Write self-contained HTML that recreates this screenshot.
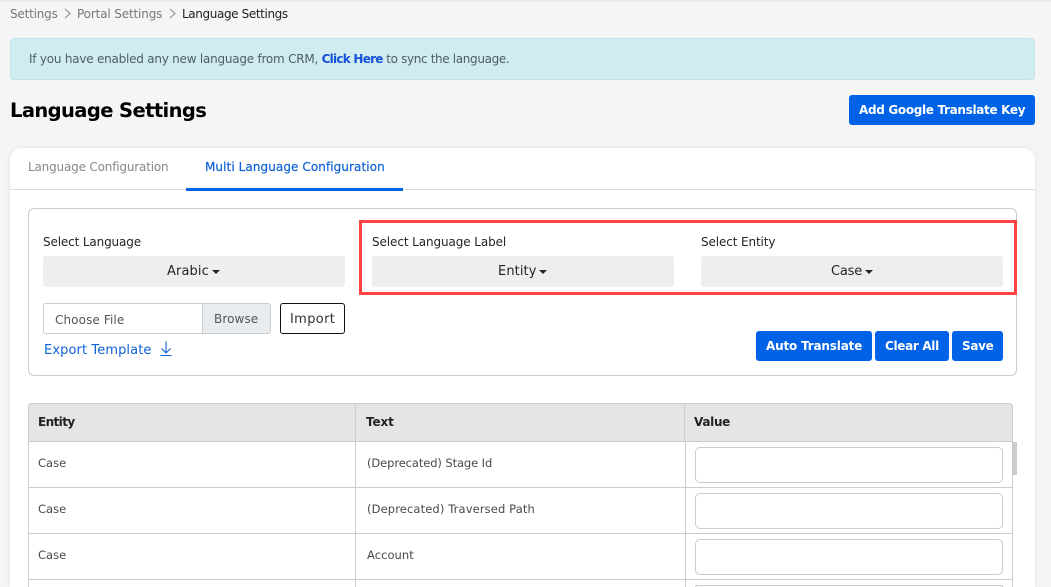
<!DOCTYPE html>
<html><head><meta charset="utf-8"><style>
html,body{margin:0;padding:0;width:1051px;height:587px;overflow:hidden;background:#f5f5f5}
body{position:relative;font-family:"DejaVu Sans","Liberation Sans",sans-serif;font-size:12px;color:#212529}
.a{position:absolute;box-sizing:border-box}
.t{position:absolute;white-space:nowrap;line-height:20px;height:20px}
.btn{position:absolute;box-sizing:border-box;background:#0062e6;border-radius:3px;color:#fff;font-weight:bold}
.dd{position:absolute;box-sizing:border-box;background:#eee;border-radius:3px;height:31px;width:302px;top:256px}
.car{position:absolute;width:0;height:0;border-left:4px solid transparent;border-right:4px solid transparent;border-top:4px solid #212529;top:270px}
.inp{position:absolute;box-sizing:border-box;left:695px;width:308px;height:36px;background:#fff;border:1px solid #ccc;border-radius:5px}
.hl{position:absolute;left:28px;width:985px;height:1px;background:#ccc}
.cell{color:#4a4a4a;font-size:11.5px}
</style></head><body>
<div class="a" style="left:0;top:0;width:1051px;height:3px;background:linear-gradient(#e8e8e8,#f5f5f5)"></div>

<div class="t" style="left:10px;top:4px;color:#777;font-size:12px;letter-spacing:-.2px">Settings</div>
<svg class="a" style="left:63px;top:8px" width="9" height="11" viewBox="0 0 9 11"><path d="M2 1l5 4.5L2 10" fill="none" stroke="#888" stroke-width="1"/></svg>
<div class="t" style="left:77px;top:4px;color:#777;font-size:12px;letter-spacing:-.15px">Portal Settings</div>
<svg class="a" style="left:168px;top:8px" width="9" height="11" viewBox="0 0 9 11"><path d="M2 1l5 4.5L2 10" fill="none" stroke="#888" stroke-width="1"/></svg>
<div class="t" style="left:182px;top:4px;color:#222;font-size:12px;letter-spacing:-.38px">Language Settings</div>

<div class="a" style="left:10px;top:38px;width:1025px;height:42px;background:#d1ecf1;border:1px solid #bee5eb;border-radius:4px"></div>
<div class="t" style="left:29px;top:49px;color:#4c5f63;font-size:12px;letter-spacing:-.23px">If you have enabled any new language from CRM, <span style="color:#1552d8;font-weight:bold;letter-spacing:-.75px">Click Here</span> <span style="letter-spacing:-.35px">to sync the language.</span></div>

<div class="t" style="left:10px;top:101px;color:#000;font-size:19.5px;font-weight:bold;letter-spacing:-.6px">Language Settings</div>
<div class="btn" style="left:849px;top:95px;width:186px;height:30px"></div>
<div class="t" style="left:859px;top:100px;color:#fff;font-size:12px;font-weight:bold;letter-spacing:-.32px">Add Google Translate Key</div>

<div class="a" style="left:10px;top:148px;width:1025px;height:439px;background:#fff;border-radius:12px 12px 0 0;box-shadow:0 0 6px rgba(0,0,0,.08)"></div>
<div class="a" style="left:10px;top:189px;width:1025px;height:1px;background:#ddd"></div>
<div class="t" style="left:28px;top:157px;color:#888;font-size:12px;letter-spacing:-.18px">Language Configuration</div>
<div class="t" style="left:205px;top:157px;color:#0f62d6;font-size:12px;letter-spacing:.08px;-webkit-text-stroke:.2px #0f62d6">Multi Language Configuration</div>
<div class="a" style="left:186px;top:188px;width:217px;height:3px;background:#0062e6"></div>

<div class="a" style="left:28px;top:208px;width:989px;height:168px;border:1px solid #ccc;border-radius:6px"></div>
<div class="a" style="left:359px;top:220px;width:658px;height:75px;border:3px solid #ff4444"></div>

<div class="t" style="left:43px;top:232px;font-size:12px;letter-spacing:-.14px">Select Language</div>
<div class="t" style="left:372px;top:232px;font-size:12px;letter-spacing:-.1px">Select Language Label</div>
<div class="t" style="left:701px;top:232px;font-size:12px;letter-spacing:-.12px">Select Entity</div>

<div class="dd" style="left:43px"></div>
<div class="dd" style="left:372px"></div>
<div class="dd" style="left:701px"></div>
<div class="t" style="left:167px;top:262px;font-size:13px;letter-spacing:.1px">Arabic</div><div class="car" style="left:212px"></div>
<div class="t" style="left:498px;top:262px;font-size:13px;letter-spacing:.1px">Entity</div><div class="car" style="left:539px"></div>
<div class="t" style="left:831px;top:262px;font-size:13px;letter-spacing:-.2px">Case</div><div class="car" style="left:865px"></div>

<div class="a" style="left:43px;top:303px;width:228px;height:31px;border:1px solid #ccc;border-radius:3px;background:#fff"></div>
<div class="a" style="left:202px;top:304px;width:68px;height:29px;background:#e9ecef;border-left:1px solid #ccc;border-radius:0 2px 2px 0"></div>
<div class="t" style="left:55px;top:310px;color:#555;font-size:12px;letter-spacing:.1px">Choose File</div>
<div class="t" style="left:214px;top:309px;color:#555;font-size:12px;letter-spacing:.1px">Browse</div>
<div class="a" style="left:280px;top:303px;width:65px;height:31px;border:1px solid #111;border-radius:3px;background:#fff"></div>
<div class="t" style="left:290px;top:310px;color:#333;font-size:13px;letter-spacing:.35px">Import</div>

<div class="t" style="left:44px;top:341px;color:#0f62d6;font-size:13px;letter-spacing:.1px">Export Template</div>
<svg class="a" style="left:159px;top:340px" width="14" height="17" viewBox="0 0 14 17"><path d="M7 1.5V13M2.5 8.5L7 13l4.5-4.5M1.5 15.5h11" fill="none" stroke="#0f62d6" stroke-width="1.1"/></svg>

<div class="btn" style="left:756px;top:331px;width:116px;height:30px"></div>
<div class="btn" style="left:875px;top:331px;width:74px;height:30px"></div>
<div class="btn" style="left:952px;top:331px;width:51px;height:30px"></div>
<div class="t" style="left:766px;top:336px;color:#fff;font-weight:bold;font-size:12px;letter-spacing:-.18px">Auto Translate</div>
<div class="t" style="left:885px;top:336px;color:#fff;font-weight:bold;font-size:12px;letter-spacing:-.32px">Clear All</div>
<div class="t" style="left:962px;top:336px;color:#fff;font-weight:bold;font-size:12px;letter-spacing:-.32px">Save</div>

<div class="a" style="left:28px;top:403px;width:985px;height:39px;background:#e5e5e5;border:1px solid #ccc;border-radius:4px 4px 0 0"></div>
<div class="a" style="left:28px;top:441px;width:1px;height:146px;background:#ccc"></div>
<div class="a" style="left:1012px;top:441px;width:1px;height:146px;background:#ccc"></div>
<div class="a" style="left:355px;top:403px;width:1px;height:184px;background:#ccc"></div>
<div class="a" style="left:684px;top:403px;width:1px;height:38px;background:#ccc"></div>
<div class="a" style="left:685px;top:441px;width:1px;height:146px;background:#ccc"></div>
<div class="hl" style="top:487px"></div>
<div class="hl" style="top:533px"></div>
<div class="hl" style="top:579px"></div>
<div class="a" style="left:1013px;top:442px;width:4px;height:33px;background:#ccc"></div>

<div class="t" style="left:38px;top:412px;color:#222;font-weight:bold;font-size:12px;letter-spacing:-.6px">Entity</div>
<div class="t" style="left:366px;top:412px;color:#222;font-weight:bold;font-size:12px;letter-spacing:-.1px">Text</div>
<div class="t" style="left:694px;top:412px;color:#222;font-weight:bold;font-size:12px;letter-spacing:-.3px">Value</div>

<div class="t cell" style="left:38px;top:453px">Case</div>
<div class="t cell" style="left:367px;top:453px;letter-spacing:-.1px">(Deprecated) Stage Id</div>
<div class="inp" style="top:447px"></div>
<div class="t cell" style="left:38px;top:499px">Case</div>
<div class="t cell" style="left:367px;top:499px;letter-spacing:.12px">(Deprecated) Traversed Path</div>
<div class="inp" style="top:493px"></div>
<div class="t cell" style="left:38px;top:545px">Case</div>
<div class="t cell" style="left:367px;top:545px;letter-spacing:.05px">Account</div>
<div class="inp" style="top:539px"></div>
<div class="inp" style="top:585px;height:2px;border-bottom:0;border-radius:5px 5px 0 0"></div>
</body></html>
